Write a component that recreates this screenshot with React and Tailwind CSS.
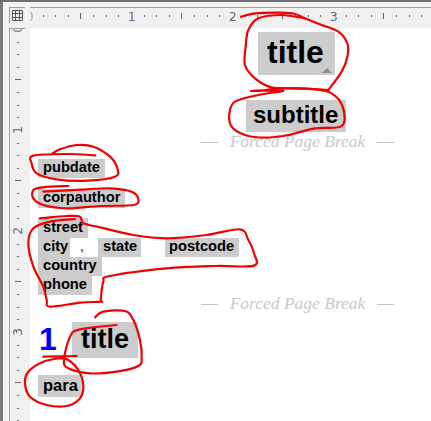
import React from 'react';

// catmull-rom through the traced points, so the pen marks stay round
const smooth = (pts) => {
  let d = `M${pts[0][0]} ${pts[0][1]}`;
  for (let i = 0; i < pts.length - 1; i++) {
    const p0 = pts[i - 1] || pts[i];
    const p1 = pts[i];
    const p2 = pts[i + 1];
    const p3 = pts[i + 2] || p2;
    d += ` C${p1[0] + (p2[0] - p0[0]) / 6} ${p1[1] + (p2[1] - p0[1]) / 6} ${p2[0] - (p3[0] - p1[0]) / 6} ${p2[1] - (p3[1] - p1[1]) / 6} ${p2[0]} ${p2[1]}`;
  }
  return d;
};

// traced in 3x crop coordinates, ox/oy is where the crop starts
const scribbles = [
  { ox: 215, oy: 0, pts: [[78, 50], [120, 40], [200, 38], [240, 42], [270, 55], [320, 75], [370, 95], [397, 130], [397, 170], [380, 215], [340, 270]] },
  { ox: 215, oy: 0, pts: [[270, 55], [200, 45], [130, 55], [100, 90], [92, 140], [90, 195], [120, 235], [170, 262], [250, 265], [340, 270]] },
  { ox: 215, oy: 0, pts: [[108, 273], [205, 272], [130, 285], [60, 305], [43, 340], [50, 380], [90, 405], [150, 413], [220, 405], [300, 385], [380, 378], [383, 320], [350, 280], [300, 268], [200, 265], [150, 270], [108, 273]] },
  { ox: 0, oy: 140, pts: [[285, 46], [200, 42], [100, 47], [95, 70], [110, 100], [170, 118], [260, 122], [345, 110], [352, 85], [330, 50], [280, 20], [230, 15], [180, 28], [155, 42]] },
  { ox: 0, oy: 140, pts: [[205, 138], [130, 142], [100, 150], [100, 175], [130, 195], [200, 205], [300, 198], [400, 195], [415, 178], [395, 155], [330, 145], [260, 148], [130, 155]] },
  { ox: 0, oy: 140, pts: [[120, 235], [200, 228], [240, 230], [250, 250], [300, 262], [400, 285], [500, 295], [620, 285], [720, 268], [745, 300], [762, 340], [762, 377], [650, 378], [500, 385], [330, 408], [310, 425], [302, 480], [302, 485], [240, 488], [150, 500], [140, 480], [130, 440], [100, 380], [85, 310], [100, 265], [150, 245], [225, 237]] },
  { ox: 0, oy: 290, pts: [[285, 82], [310, 65], [375, 63], [400, 90], [420, 150], [425, 205], [415, 228], [350, 245], [270, 250], [205, 235], [192, 210], [210, 140], [240, 118], [350, 105]] },
  { ox: 0, oy: 290, pts: [[130, 200], [230, 198]] },
  { ox: 0, oy: 290, pts: [[190, 203], [130, 215], [85, 245], [75, 280], [90, 320], [140, 345], [200, 348], [240, 325], [250, 285], [235, 240], [205, 210], [180, 205]] },
];

const Scribbles = () => (
  <svg className="absolute left-0 top-0 pointer-events-none" width="431" height="421" fill="none">
    {scribbles.map((s, i) => (
      <path
        key={i}
        d={smooth(s.pts.map(([x, y]) => [s.ox + x / 3, s.oy + y / 3]))}
        stroke="#f00000"
        strokeWidth="2.2"
        strokeLinecap="round"
        strokeLinejoin="round"
      />
    ))}
  </svg>
);

const rulerFont = 'DejaVu Sans, sans-serif';

const TopRuler = () => (
  <svg width="401" height="16" className="block">
    {Array.from({ length: 32 }, (_, i) => {
      const x = Math.round(i * 12.62) + 0.5;
      if (i % 8 === 0) return null;
      return i % 4 === 0
        ? <line key={i} x1={x} x2={x} y1="5" y2="11" stroke="#666" />
        : <line key={i} x1={x} x2={x} y1="7" y2="9" stroke="#666" />;
    })}
    <text x="-4" y="13" fontSize="12" fill="#d8a060" fontFamily={rulerFont}>0</text>
    <text x="98" y="13" fontSize="12" fill="#7a5a80" fontFamily={rulerFont}>1</text>
    <text x="199" y="13" fontSize="12" fill="#666" fontFamily={rulerFont}>2</text>
    <text x="300" y="13" fontSize="12" fill="#666" fontFamily={rulerFont}>3</text>
  </svg>
);

const SideRuler = () => (
  <svg width="16" height="393" className="block">
    {Array.from({ length: 32 }, (_, i) => {
      const y = Math.round(i * 12.62) + 0.5;
      if (i % 8 === 0) return null;
      return i % 4 === 0
        ? <line key={i} x1="5" x2="11" y1={y} y2={y} stroke="#666" />
        : <line key={i} x1="7" x2="9" y1={y} y2={y} stroke="#666" />;
    })}
    <text transform="translate(12 0) rotate(-90)" fontSize="12" fill="#7a8aa0" textAnchor="middle" fontFamily={rulerFont}>0</text>
    <text transform="translate(12 101) rotate(-90)" fontSize="12" fill="#666" textAnchor="middle" fontFamily={rulerFont}>1</text>
    <text transform="translate(12 202) rotate(-90)" fontSize="12" fill="#666" textAnchor="middle" fontFamily={rulerFont}>2</text>
    <text transform="translate(12 303) rotate(-90)" fontSize="12" fill="#666" textAnchor="middle" fontFamily={rulerFont}>3</text>
  </svg>
);

const Tag = ({ children, className = '' }) => (
  <span className={`inline-block bg-[#cccccc] text-black font-bold ${className}`}>{children}</span>
);

const PageBreak = ({ className = '' }) => (
  <div className={`flex items-center justify-center h-[18px] pl-[2px] ${className}`}>
    <div className="w-[17px] h-px bg-[#c4c4c4] mt-[2px]" />
    <span className="mx-[11px] w-[137px] text-center whitespace-nowrap text-[#c8c8c8] italic text-[17.5px] font-['Liberation_Serif',serif]">
      Forced Page Break
    </span>
    <div className="w-[17px] h-px bg-[#c4c4c4] mt-[2px]" />
  </div>
);

const App = () => {
  return (
    <div className="relative w-[431px] h-[421px] overflow-hidden bg-[#f0f0f0] font-['Liberation_Sans',Arial,sans-serif]">
      <div className="h-[2px] bg-[#6e6e6e]" />
      <div className="flex">
        <div className="w-[3px] h-[419px] bg-[#7a7a7a] shrink-0" />
        <div className="w-[6px] bg-[#f4f4f4] shrink-0" />
        <div className="flex-1 min-w-0">
          <div className="h-[5px] bg-[#f4f4f4]" />
          {/* rulers row */}
          <div className="flex h-[16px]">
            <div className="w-[16px] h-[16px] border-t border-l border-[#a0a0a0] flex items-center justify-center">
              <svg width="11" height="11" viewBox="0 0 11 11" fill="none" stroke="#555">
                <path d="M.5.5h10v10H.5zM3.5.5v10M7.5.5v10M.5 3.5h10M.5 7.5h10" />
              </svg>
            </div>
            <div className="w-[5px] bg-[#f4f4f4]" />
            <div className="flex-1 border-t border-[#a0a0a0]">
              <TopRuler />
            </div>
          </div>
          <div className="h-[5px] bg-[#f0f0f0]" />
          <div className="flex">
            <div className="w-[16px] h-[393px] border-l border-t border-[#a0a0a0] shrink-0">
              <SideRuler />
            </div>
            <div className="w-[5px] shrink-0" />
            {/* page, wider than the window so the centered blocks sit right of middle */}
            <div className="flex-1 h-[393px] bg-white overflow-hidden">
              <div className="w-[533px] flex flex-col pt-[4px]">
                <div className="flex justify-center">
                  <Tag className="relative w-[77px] h-[43px] pl-[9px] text-[32px] leading-[40px]">
                    title
                    <span className="absolute right-[3px] bottom-[2px] w-0 h-0 border-x-[5px] border-x-transparent border-b-[5px] border-b-[#8c8c8c]" />
                  </Tag>
                </div>
                <div className="flex justify-center mt-[25px] pr-[1px]">
                  <Tag className="w-[100px] h-[32px] pl-[7px] text-[24px] leading-[30px]">subtitle</Tag>
                </div>
                <PageBreak />
                <div className="flex flex-col items-start pl-[8px] mt-[9px]">
                  <Tag className="h-[19px] px-[5px] text-[14.67px] leading-[17px]">pubdate</Tag>
                  <Tag className="h-[19px] px-[5px] mt-[11px] text-[14.67px] leading-[17px]">corpauthor</Tag>
                  <Tag className="h-[20px] px-[5px] mt-[10px] text-[14.67px] leading-[18px]">street</Tag>
                  <div className="flex h-[19px]">
                    <Tag className="w-[32px] pl-[5px] text-[14.67px] leading-[17px]">city</Tag>
                    <span className="w-[28px] pr-[4px] text-center text-[#0000ff] font-bold text-[10px] leading-[20px]">,</span>
                    <Tag className="w-[43px] pl-[5px] text-[14.67px] leading-[17px]">state</Tag>
                    <span className="w-[24px]" />
                    <Tag className="w-[74px] pl-[4px] text-[14.67px] leading-[17px]">postcode</Tag>
                  </div>
                  <Tag className="h-[19px] px-[5px] text-[14.67px] leading-[17px]">country</Tag>
                  <Tag className="h-[19px] px-[5px] text-[14.67px] leading-[17px]">phone</Tag>
                </div>
                <PageBreak className="mt-[-1px]" />
                <div className="flex pl-[9px] mt-[10px]">
                  <span className="w-[33px] text-[#0000ff] font-bold text-[32px] leading-[34px]">1</span>
                  <Tag className="w-[66px] h-[36px] pl-[9px] text-[27px] leading-[34px]">title</Tag>
                </div>
                <div className="flex pl-[8px] mt-[17px]">
                  <Tag className="w-[44px] h-[22px] pl-[5px] text-[16.5px] leading-[21px]">para</Tag>
                </div>
              </div>
            </div>
          </div>
        </div>
      </div>
      <Scribbles />
    </div>
  );
};

export default App;
